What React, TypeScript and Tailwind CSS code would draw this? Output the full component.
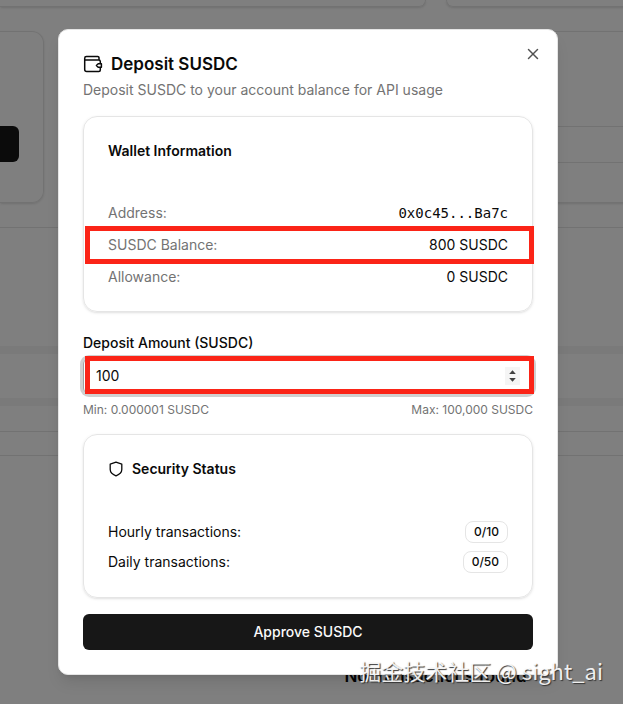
import React from "react";
import { X } from "lucide-react";

function WalletIcon() {
  return (
    <svg width="20" height="20" viewBox="0 0 20 20" fill="none" stroke="currentColor" strokeWidth="1.5" strokeLinecap="round" strokeLinejoin="round" aria-hidden="true">
      <path d="M16 5.6V3.8a1.3 1.3 0 0 0-1.3-1.3H3.4a1.7 1.7 0 0 0-1.7 1.7v11.3a2 2 0 0 0 2 2h12.1a1.5 1.5 0 0 0 1.5-1.5v-2.2" />
      <path d="M1.8 6h14a1.5 1.5 0 0 1 1.5 1.5v1.8" />
      <path d="M18.4 9.7h-3.2l-1.8 1.8 1.8 1.8h3.2z" />
    </svg>
  );
}

function ShieldIcon() {
  return (
    <svg width="16" height="16" viewBox="0 0 16 16" fill="none" stroke="currentColor" strokeWidth="1.3" strokeLinejoin="round" aria-hidden="true">
      <path d="M8 1.2 13.8 3.2V8.4c0 3-2.4 4.9-5.8 6.4-3.4-1.5-5.8-3.4-5.8-6.4V3.2z" />
    </svg>
  );
}

function Backdrop() {
  return (
    <div className="absolute inset-0 overflow-hidden bg-white" aria-hidden="true">
      <div className="grid h-[7px] grid-cols-[426px_1fr] gap-5">
        <div className="rounded-br-xl border-r border-b border-neutral-200 shadow-sm" />
        <div className="-mr-4 rounded-bl-xl border-b border-l border-neutral-200 shadow-sm" />
      </div>
      <div className="mt-6 grid h-[172px] grid-cols-[44px_1fr] gap-5">
        <div className="rounded-r-xl border border-l-0 border-neutral-200 pt-[94px] shadow-sm">
          <div className="h-9 w-[19px] rounded-r-md bg-neutral-900" />
        </div>
        <div className="-mr-4 rounded-xl border border-neutral-200 pt-[94px] shadow-sm">
          <div className="h-[37px] border-y border-neutral-200" />
        </div>
      </div>
      <div className="mt-6 border-t border-neutral-200">
        <div className="h-[118px]" />
        <div className="h-2 bg-neutral-100" />
        <div className="h-11" />
        <div className="h-2 bg-neutral-100" />
        <div className="h-[26px] border-b border-neutral-200" />
        <div className="h-6 border-b border-neutral-200" />
      </div>
      <div className="flex flex-col items-center gap-3 pt-[208px] pl-[248px]">
        <p className="text-[17px] leading-6 font-semibold whitespace-nowrap text-neutral-950">No transactions found</p>
        <p className="text-sm leading-5 whitespace-nowrap text-neutral-500">
          You haven't made any transactions yet. Start by adding
        </p>
      </div>
      <div className="absolute inset-0 bg-black/50" />
    </div>
  );
}

function Card({ children }: { children: React.ReactNode }) {
  return <section className="rounded-[14px] border border-neutral-200 p-6 shadow-sm">{children}</section>;
}

function Highlight({ className }: { className: string }) {
  return <span className={`pointer-events-none absolute h-[38px] border-[5px] border-[#fb2417] ${className}`} />;
}

export default function App() {
  return (
    <div className="relative flex min-h-screen items-center justify-center overflow-hidden pr-[7px] font-[Inter,'Noto_Sans_CJK_SC',sans-serif] text-sm leading-5 text-neutral-950">
      <Backdrop />
      <main role="dialog" aria-labelledby="title" className="relative w-full max-w-[500px] rounded-[10px] border border-neutral-200 bg-white p-6 shadow-lg">
        <header>
          <h1 id="title" className="flex items-center gap-2 text-[17px] leading-5 font-semibold">
            <WalletIcon />
            Deposit SUSDC
          </h1>
          <p className="mt-[6px] text-neutral-500">Deposit SUSDC to your account balance for API usage</p>
        </header>
        <button type="button" aria-label="Close" className="absolute top-[15px] right-[15px] text-neutral-600">
          <X size={18} strokeWidth={2} />
        </button>

        <div className="mt-4">
          <Card>
            <h2 className="font-semibold">Wallet Information</h2>
            <dl className="mt-[42px] flex flex-col gap-3">
              <div className="flex justify-between">
                <dt className="text-neutral-500">Address:</dt>
                <dd className="font-['DejaVu_Sans_Mono',monospace]">0x0c45...Ba7c</dd>
              </div>
              <div className="relative flex justify-between">
                <dt className="text-neutral-500">SUSDC Balance:</dt>
                <dd>800 SUSDC</dd>
                <Highlight className="-top-[9px] -right-[26px] -left-[23px]" />
              </div>
              <div className="flex justify-between">
                <dt className="text-neutral-500">Allowance:</dt>
                <dd>0 SUSDC</dd>
              </div>
            </dl>
          </Card>
        </div>

        <div className="mt-6">
          <label htmlFor="amount" className="block leading-[14px] font-medium">Deposit Amount (SUSDC)</label>
          <div className="relative mt-2 flex h-9 items-center rounded-md border border-neutral-400 px-3 ring-[3px] ring-neutral-400/50">
            <input id="amount" type="text" inputMode="decimal" defaultValue="100" className="min-w-0 flex-1 bg-transparent outline-none" />
            <button type="button" aria-label="Change amount" className="flex h-[18px] w-[15px] items-center justify-center bg-neutral-100 text-neutral-700">
              <svg width="7" height="12" viewBox="0 0 7 12" fill="currentColor" aria-hidden="true">
                <path d="M0.2 4 3.5 0.2 6.8 4zM0.2 8h6.6L3.5 11.8z" />
              </svg>
            </button>
            <Highlight className="-top-[3px] -right-[2px] left-px" />
          </div>
          <div className="mt-2 flex justify-between text-xs leading-4 text-neutral-500">
            <span>Min: 0.000001 SUSDC</span>
            <span>Max: 100,000 SUSDC</span>
          </div>
        </div>

        <div className="mt-4">
          <Card>
            <h2 className="flex items-center gap-2 font-semibold">
              <ShieldIcon />
              Security Status
            </h2>
            <dl className="mt-[42px] flex flex-col gap-2">
              <div className="flex items-center justify-between">
                <dt>Hourly transactions:</dt>
                <dd className="rounded-lg border border-neutral-200 px-2 py-[2px] text-xs leading-4 font-medium">0/10</dd>
              </div>
              <div className="flex items-center justify-between">
                <dt>Daily transactions:</dt>
                <dd className="rounded-lg border border-neutral-200 px-2 py-[2px] text-xs leading-4 font-medium">0/50</dd>
              </div>
            </dl>
          </Card>
        </div>

        <button type="button" className="mt-4 h-9 w-full rounded-md bg-neutral-900 font-medium text-neutral-50">
          Approve SUSDC
        </button>
      </main>
      <p className="absolute right-5 bottom-5 font-['Noto_Sans_CJK_SC',sans-serif] text-[22px] leading-7 text-white/90 [text-shadow:1px_1px_1px_#333]">
        掘金技术社区 @ sight_ai
      </p>
    </div>
  );
}
